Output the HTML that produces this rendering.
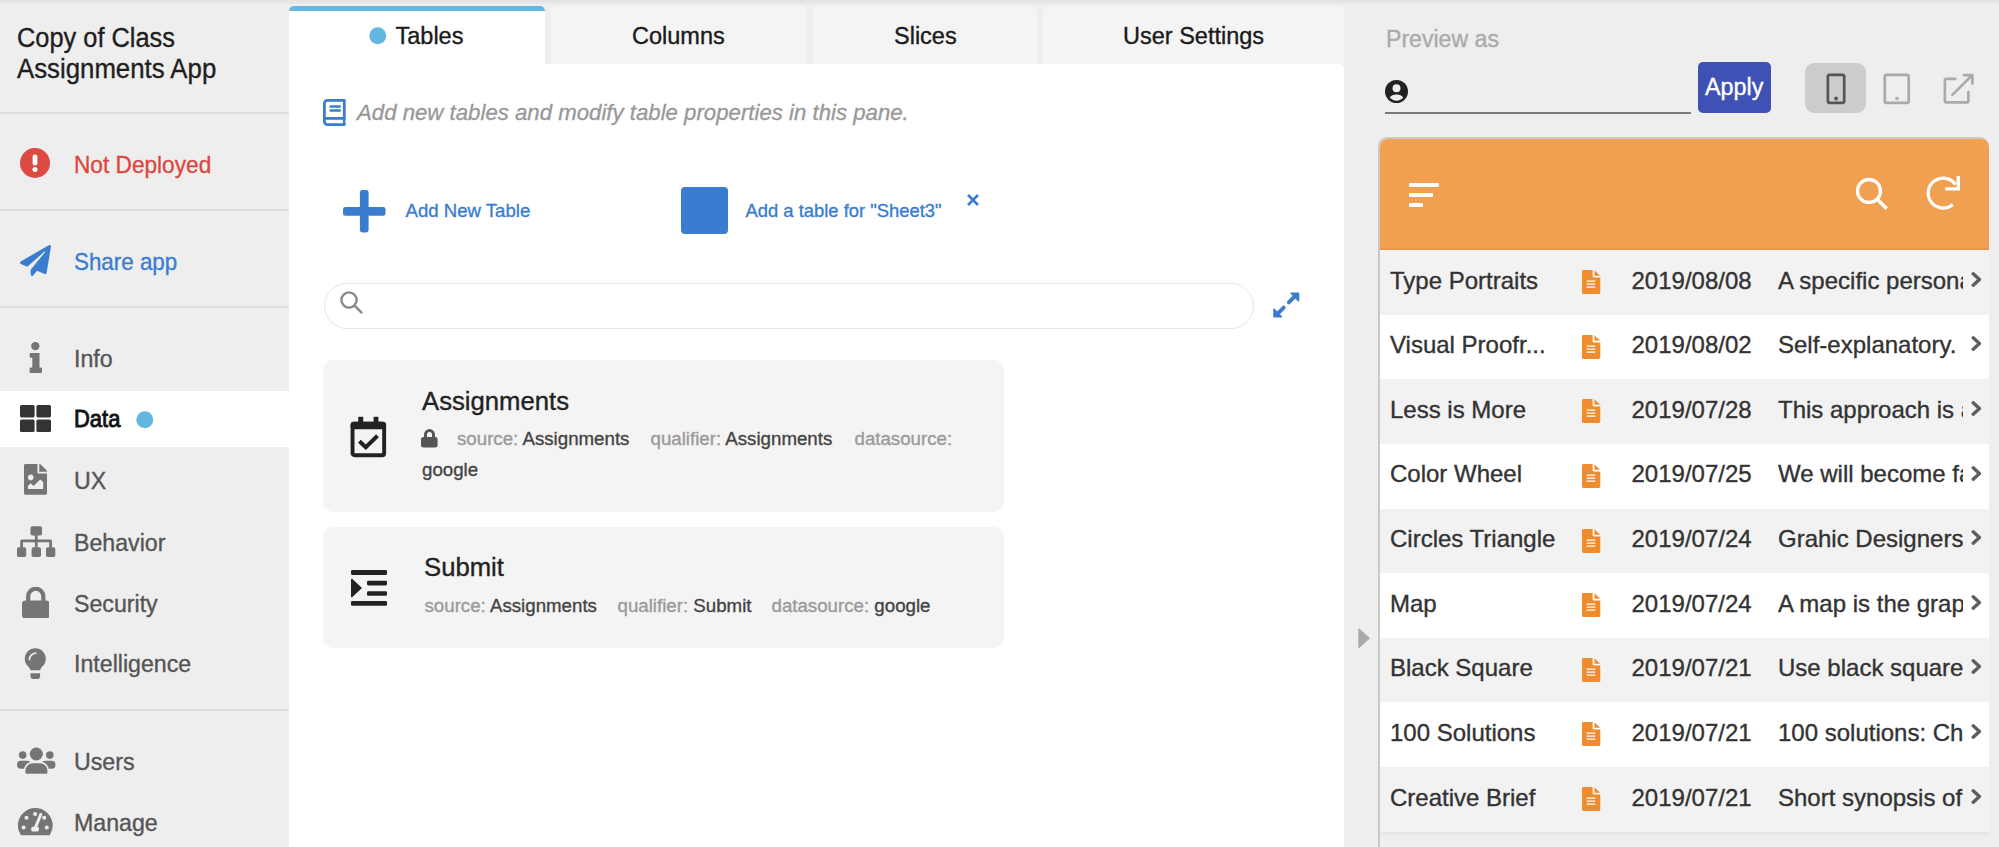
<!DOCTYPE html>
<html><head><meta charset="utf-8"><title>AppSheet Editor</title>
<style>
html,body{margin:0;padding:0;width:1999px;height:847px;overflow:hidden;background:#eeeeee;}
body{position:relative;font-family:"Liberation Sans",sans-serif;}
.t{position:absolute;white-space:nowrap;-webkit-text-stroke-width:0.35px;}
.r{position:absolute;display:block;}
</style></head><body>
<div class="r" style="left:0px;top:0px;width:1999px;height:847px;background:#eeeeee;"></div>
<div class="r" style="left:0px;top:0px;width:1999px;height:4px;background:linear-gradient(#e2e2e2,#eaeaea);"></div>
<div class="t" style="left:16.5px;top:25.3px;font-size:27px;line-height:27px;color:#1e1e1e;font-weight:normal;font-style:normal;transform:scaleX(0.94);transform-origin:0 0;">Copy of Class</div>
<div class="t" style="left:16.5px;top:56.1px;font-size:27px;line-height:27px;color:#1e1e1e;font-weight:normal;font-style:normal;transform:scaleX(0.955);transform-origin:0 0;">Assignments App</div>
<div class="r" style="left:0px;top:112px;width:289px;height:2px;background:#dddddd;"></div>
<div class="r" style="left:0px;top:209px;width:289px;height:2px;background:#dddddd;"></div>
<div class="r" style="left:0px;top:306px;width:289px;height:2px;background:#dddddd;"></div>
<div class="r" style="left:0px;top:709px;width:289px;height:2px;background:#dddddd;"></div>
<svg class="r" style="left:20px;top:148px;" width="30" height="30" viewBox="0 0 30 30"><circle cx="15" cy="15" r="15" fill="#dd4a43"/><rect x="12.6" y="6.5" width="4.8" height="11" rx="2.2" fill="#fff"/><circle cx="15" cy="21.6" r="2.5" fill="#fff"/></svg>
<div class="t" style="left:74px;top:152.9px;font-size:24.1px;line-height:24.1px;color:#dc4841;font-weight:normal;font-style:normal;transform:scaleX(0.94);transform-origin:0 0;">Not Deployed</div>
<svg class="r" style="left:20px;top:244.5px;" width="31" height="31" viewBox="0 0 512 512"><path fill="#3a7dd0" d="M476 3.2L12.5 270.6c-18.1 10.4-15.8 35.6 2.2 43.2L121 358.4l287.3-253.2c5.5-4.9 13.3 2.6 8.6 8.3L176 407v80.5c0 23.6 28.5 32.9 42.5 15.8L282 426l124.6 52.2c14.2 6 30.4-2.9 33-18.2l72-432C515 7.8 493.3-6.8 476 3.2z"/></svg>
<div class="t" style="left:74px;top:249.8px;font-size:23.8px;line-height:23.8px;color:#3a7dd0;font-weight:normal;font-style:normal;transform:scaleX(0.94);transform-origin:0 0;">Share app</div>
<div class="r" style="left:0px;top:391px;width:289px;height:56px;background:#ffffff;"></div>
<svg class="r" style="left:29px;top:342px;" width="13" height="31" viewBox="0 0 13 31"><circle cx="6.3" cy="4.1" r="4.2" fill="#757575"/><path fill="#757575" d="M1.6 11h8.9v14.6h1.6c.5 0 .9.4.9.9v3.6c0 .5-.4.9-.9.9H1.5c-.5 0-.9-.4-.9-.9v-3.6c0-.5.4-.9.9-.9h1.8V15.8H1.6c-.5 0-.9-.4-.9-.9v-3c0-.5.4-.9.9-.9z"/></svg>
<div class="t" style="left:73.5px;top:346.7px;font-size:24.4px;line-height:24.4px;color:#555555;font-weight:normal;font-style:normal;transform:scaleX(0.95);transform-origin:0 0;">Info</div>
<svg class="r" style="left:19.5px;top:405px;" width="31" height="27" viewBox="0 0 31 27"><rect x="0" y="0" width="14.6" height="12.4" rx="1.6" fill="#333"/><rect x="16.4" y="0" width="14.6" height="12.4" rx="1.6" fill="#333"/><rect x="0" y="14.4" width="14.6" height="12.6" rx="1.6" fill="#333"/><rect x="16.4" y="14.4" width="14.6" height="12.6" rx="1.6" fill="#333"/></svg>
<div class="t" style="left:74px;top:408.4px;font-size:23.6px;line-height:23.6px;color:#111;font-weight:normal;font-style:normal;transform:scaleX(0.93);transform-origin:0 0;-webkit-text-stroke-width:0.9px">Data</div>
<svg class="r" style="left:136px;top:411px;" width="17.5" height="17.5" viewBox="0 0 18 18"><circle cx="9" cy="9" r="8.7" fill="#62b6e0"/></svg>
<svg class="r" style="left:24px;top:464.3px;" width="23" height="30.7" viewBox="0 0 384 512"><path fill="#757575" d="M384 121.941V128H256V0h6.059a24 24 0 0 1 16.97 7.029l97.941 97.941a24.002 24.002 0 0 1 7.03 16.971z"/><path fill="#757575" d="M248 160c-13.2 0-24-10.8-24-24V0H24C10.745 0 0 10.745 0 24v464c0 13.255 10.745 24 24 24h336c13.255 0 24-10.745 24-24V160H248zm-135.455 16c26.51 0 48 21.49 48 48s-21.49 48-48 48-48-21.49-48-48 21.49-48 48-48zm208 240h-256l.485-48.485L104.545 328c4.686-4.686 11.799-4.201 16.485.485L160.545 368 264.06 264.485c4.686-4.686 12.284-4.686 16.971 0L320.545 304v112z"/></svg>
<div class="t" style="left:73.5px;top:468.7px;font-size:24.4px;line-height:24.4px;color:#555555;font-weight:normal;font-style:normal;transform:scaleX(0.95);transform-origin:0 0;">UX</div>
<svg class="r" style="left:17px;top:525.5px;" width="38.5" height="31.5" viewBox="0 0 38.5 31.5"><rect x="13.5" y="0.2" width="11.5" height="9.3" rx="1.8" fill="#757575"/><rect x="17.9" y="8.5" width="2.7" height="13" fill="#757575"/><path fill="#757575" d="M5 13.5h28.2c1 0 1.8.8 1.8 1.8V22h-2.8v-5.7H6V22H3.2v-6.7c0-1 .8-1.8 1.8-1.8z"/><rect x="0" y="21.3" width="9.2" height="9.7" rx="1.8" fill="#757575"/><rect x="14.6" y="21.3" width="9.4" height="9.7" rx="1.8" fill="#757575"/><rect x="29" y="21.3" width="9.3" height="9.7" rx="1.8" fill="#757575"/></svg>
<div class="t" style="left:73.5px;top:530.7px;font-size:24.4px;line-height:24.4px;color:#555555;font-weight:normal;font-style:normal;transform:scaleX(0.95);transform-origin:0 0;">Behavior</div>
<svg class="r" style="left:21.5px;top:586.5px;" width="27.5" height="31.5" viewBox="0 0 27.5 31.5"><path fill="none" stroke="#757575" stroke-width="4.2" d="M6.2 15.5V9.3a7.55 7.55 0 0 1 15.1 0v6.2"/><rect x="0" y="13.4" width="27.5" height="18.1" rx="3.4" fill="#757575"/></svg>
<div class="t" style="left:73.5px;top:591.7px;font-size:24.4px;line-height:24.4px;color:#555555;font-weight:normal;font-style:normal;transform:scaleX(0.95);transform-origin:0 0;">Security</div>
<svg class="r" style="left:24px;top:647.5px;" width="22.5" height="31.5" viewBox="0 0 22.5 31.5"><path fill="#757575" d="M11.3 0.3C5.4 0.3 0.8 5 0.8 10.9c0 3 1.2 5.3 3 7.2 1.2 1.3 2.3 2.8 2.6 4.1h9.8c.3-1.3 1.4-2.8 2.6-4.1 1.8-1.9 3-4.2 3-7.2C21.8 5 17.2 0.3 11.3 0.3z"/><path fill="none" stroke="#eee" stroke-width="1.7" stroke-linecap="round" d="M5.4 11.6A6.6 6.6 0 0 1 11.6 5.2"/><path fill="#757575" d="M6.5 25.3h9.6v2.9c0 1.6-1.3 2.9-2.9 2.9h-3.8c-1.6 0-2.9-1.3-2.9-2.9z"/></svg>
<div class="t" style="left:73.5px;top:652.2px;font-size:24.4px;line-height:24.4px;color:#555555;font-weight:normal;font-style:normal;transform:scaleX(0.95);transform-origin:0 0;">Intelligence</div>
<svg class="r" style="left:17px;top:746.5px;" width="38.5" height="28" viewBox="0 0 38.5 28"><circle cx="19.3" cy="7" r="6.5" fill="#757575"/><circle cx="5.7" cy="8.1" r="3.8" fill="#757575"/><circle cx="32.8" cy="8.1" r="3.8" fill="#757575"/><rect x="0" y="13.8" width="14" height="8" rx="4" fill="#757575"/><rect x="24.5" y="13.8" width="14" height="8" rx="4" fill="#757575"/><path fill="#757575" stroke="#eee" stroke-width="1.6" d="M15.6 15.5h7.6c4.4 0 8 3.6 8 8V25.6c0 1.1-.9 2-2 2H9.6c-1.1 0-2-.9-2-2V23.5c0-4.4 3.6-8 8-8z"/></svg>
<div class="t" style="left:73.5px;top:749.5px;font-size:24.4px;line-height:24.4px;color:#555555;font-weight:normal;font-style:normal;transform:scaleX(0.95);transform-origin:0 0;">Users</div>
<svg class="r" style="left:18px;top:808px;" width="35" height="27.5" viewBox="0 0 35 27.5"><path fill="#757575" d="M2.9 27.2A17.4 17.4 0 1 1 31.7 27.2Z"/><g fill="#eee"><circle cx="17.1" cy="6" r="2"/><circle cx="8.5" cy="9.8" r="2"/><circle cx="26.2" cy="9.8" r="2"/><circle cx="5.6" cy="19.5" r="2"/><circle cx="28.8" cy="19.5" r="2"/><rect x="13.2" y="18.7" width="7.7" height="4.8" rx="1.4"/></g><path stroke="#eee" stroke-width="3" stroke-linecap="round" d="M17 20.5L22.8 6.5"/></svg>
<div class="t" style="left:73.5px;top:810.7px;font-size:24.4px;line-height:24.4px;color:#555555;font-weight:normal;font-style:normal;transform:scaleX(0.95);transform-origin:0 0;">Manage</div>
<div class="r" style="left:289px;top:64px;width:1055px;height:783px;background:#ffffff;border-top-right-radius:4px"></div>
<div class="r" style="left:289px;top:6px;width:255.5px;height:58px;background:#ffffff;border-radius:6px 6px 0 0;overflow:hidden"></div>
<div class="r" style="left:289px;top:6px;width:255.5px;height:4.5px;background:#63b8e2;border-radius:6px 6px 0 0"></div>
<div class="r" style="left:551px;top:6px;width:255.5px;height:58px;background:#f4f4f4;border-radius:5px 5px 0 0"></div>
<div class="r" style="left:813px;top:6px;width:223.5px;height:58px;background:#f4f4f4;border-radius:5px 5px 0 0"></div>
<div class="r" style="left:1043px;top:6px;width:301px;height:58px;background:#f4f4f4;border-radius:5px 5px 0 0"></div>
<svg class="r" style="left:369px;top:27px;" width="17.5" height="17.5" viewBox="0 0 18 18"><circle cx="9" cy="9" r="8.7" fill="#62b6e0"/></svg>
<div class="t" style="left:395.5px;top:24.5px;font-size:23.5px;line-height:23.5px;color:#1a1a1a;font-weight:normal;font-style:normal;">Tables</div>
<div class="t" style="left:632px;top:24.5px;font-size:23.5px;line-height:23.5px;color:#1a1a1a;font-weight:normal;font-style:normal;">Columns</div>
<div class="t" style="left:894px;top:24.5px;font-size:23.5px;line-height:23.5px;color:#1a1a1a;font-weight:normal;font-style:normal;">Slices</div>
<div class="t" style="left:1123px;top:24.5px;font-size:23.5px;line-height:23.5px;color:#1a1a1a;font-weight:normal;font-style:normal;">User Settings</div>
<svg class="r" style="left:323px;top:99px;" width="23.5" height="26.5" viewBox="0 0 23.5 26.5"><path fill="none" stroke="#3a7dd0" stroke-width="2.8" stroke-linejoin="round" d="M21.3 1.4H4.6C2.8 1.4 1.4 2.8 1.4 4.6V22.4C1.4 24.2 2.8 25.6 4.6 25.6H21.3Z"/><path fill="none" stroke="#3a7dd0" stroke-width="2.8" d="M1.4 19.4H21.3"/><path fill="#fff" d="M23.6 20.9L21.6 22.1 23.6 23.3z"/><rect x="6.4" y="6.2" width="11.6" height="2.5" rx="1.2" fill="#3a7dd0"/><rect x="6.4" y="10.2" width="11.6" height="2.5" rx="1.2" fill="#3a7dd0"/></svg>
<div class="t" style="left:357.2px;top:101.0px;font-size:22.8px;line-height:22.8px;color:#999999;font-weight:normal;font-style:italic;transform:scaleX(0.974);transform-origin:0 0;">Add new tables and modify table properties in this pane.</div>
<svg class="r" style="left:343px;top:190px;" width="42.5" height="42.5" viewBox="0 0 42.5 42.5"><rect x="16.9" y="0" width="8.7" height="42.5" rx="2.4" fill="#3a7dd0"/><rect x="0" y="16.9" width="42.5" height="8.9" rx="2.4" fill="#3a7dd0"/></svg>
<div class="t" style="left:405.5px;top:201.7px;font-size:18.6px;line-height:18.6px;color:#3a7dd0;font-weight:normal;font-style:normal;">Add New Table</div>
<div class="r" style="left:680.5px;top:187px;width:47.3px;height:47.3px;background:#3a7dd0;border-radius:4px"></div>
<div class="t" style="left:745.5px;top:201.5px;font-size:18.4px;line-height:18.4px;color:#3a7dd0;font-weight:normal;font-style:normal;">Add a table for "Sheet3"</div>
<svg class="r" style="left:967px;top:193.8px;" width="12" height="12" viewBox="0 0 12 12"><path stroke="#3a7dd0" stroke-width="2.6" d="M1 1L11 11M11 1L1 11"/></svg>
<div class="r" style="left:323.5px;top:282.5px;width:930px;height:46.5px;background:#ffffff;border:1.5px solid #e6e6e6;border-radius:24px;box-sizing:border-box"></div>
<svg class="r" style="left:339px;top:290px;" width="25" height="25" viewBox="0 0 25 25"><circle cx="10" cy="10" r="7.6" fill="none" stroke="#8a8a8a" stroke-width="2.4"/><path stroke="#8a8a8a" stroke-width="2.6" stroke-linecap="round" d="M15.6 15.6L22.3 22.3"/></svg>
<svg class="r" style="left:1265px;top:285px;" width="40" height="40" viewBox="0 0 40 40"><g fill="#3a7dd0" stroke="#3a7dd0" stroke-linejoin="round"><path stroke-width="1.6" d="M26.2 8.3H33.5V15.6z"/><path stroke-width="1.6" d="M16.3 31.7H9V24.4z"/><path stroke-width="3.9" stroke-linecap="round" d="M23.8 17.4L30.5 10.7M18.7 22.6L12 29.3"/></g></svg>
<div class="r" style="left:323px;top:360px;width:681px;height:152px;background:#f4f4f4;border-radius:10px"></div>
<div class="r" style="left:323px;top:527px;width:681px;height:121px;background:#f4f4f4;border-radius:10px"></div>
<svg class="r" style="left:349.5px;top:415.5px;" width="37" height="42" viewBox="0 0 37 42"><rect x="8.2" y="0.8" width="5" height="7" fill="#222"/><rect x="23.6" y="0.8" width="4.8" height="7" fill="#222"/><rect x="2.55" y="7.75" width="31.6" height="31.5" rx="2" fill="none" stroke="#222" stroke-width="3.9"/><rect x="0.6" y="5.8" width="35.5" height="7.5" rx="3" fill="#222"/><path fill="none" stroke="#222" stroke-width="4" d="M9.4 25.3L15.8 31.2 27.5 19.8"/></svg>
<div class="t" style="left:422px;top:388.5px;font-size:25.7px;line-height:25.7px;color:#222;font-weight:normal;font-style:normal;">Assignments</div>
<svg class="r" style="left:421px;top:429px;" width="17" height="19" viewBox="0 0 17 19"><path fill="none" stroke="#555" stroke-width="3" d="M4.5 9V5.6a4 4 0 0 1 8 0V9"/><rect x="0" y="8" width="16.6" height="10.6" rx="2.4" fill="#555"/></svg>
<div class="t" style="left:457px;top:429.5px;font-size:18.7px;line-height:18.7px;color:#444;font-weight:normal;font-style:normal;"><span style="color:#9a9a9a">source: </span>Assignments</div>
<div class="t" style="left:650.5px;top:429.5px;font-size:18.7px;line-height:18.7px;color:#444;font-weight:normal;font-style:normal;"><span style="color:#9a9a9a">qualifier: </span>Assignments</div>
<div class="t" style="left:854.5px;top:429.5px;font-size:18.7px;line-height:18.7px;color:#444;font-weight:normal;font-style:normal;"><span style="color:#9a9a9a">datasource:</span></div>
<div class="t" style="left:422px;top:460.6px;font-size:18.7px;line-height:18.7px;color:#444;font-weight:normal;font-style:normal;">google</div>
<svg class="r" style="left:351px;top:570px;" width="36" height="36" viewBox="0 0 36 36"><rect x="0" y="0" width="36" height="4.9" rx="1.3" fill="#222"/><rect x="16" y="10.8" width="20" height="4.6" rx="1.3" fill="#222"/><rect x="16" y="21.2" width="20" height="4.6" rx="1.3" fill="#222"/><rect x="0" y="31" width="36" height="4.8" rx="1.3" fill="#222"/><path fill="#222" stroke="#222" stroke-width="1.6" stroke-linejoin="round" d="M0.8 9.6L10 18 0.8 26.5z"/></svg>
<div class="t" style="left:424px;top:554.6px;font-size:25.7px;line-height:25.7px;color:#222;font-weight:normal;font-style:normal;">Submit</div>
<div class="t" style="left:424.5px;top:596.8px;font-size:18.7px;line-height:18.7px;color:#444;font-weight:normal;font-style:normal;"><span style="color:#9a9a9a">source: </span>Assignments</div>
<div class="t" style="left:617.5px;top:596.8px;font-size:18.7px;line-height:18.7px;color:#444;font-weight:normal;font-style:normal;"><span style="color:#9a9a9a">qualifier: </span>Submit</div>
<div class="t" style="left:771.5px;top:596.8px;font-size:18.7px;line-height:18.7px;color:#444;font-weight:normal;font-style:normal;"><span style="color:#9a9a9a">datasource: </span>google</div>
<svg class="r" style="left:1357.5px;top:628px;" width="12" height="20.5" viewBox="0 0 12 20.5"><path fill="#aaaaaa" stroke="#aaaaaa" stroke-width="1.5" stroke-linejoin="round" d="M1 1.2L11 10.25 1 19.3z"/></svg>
<div class="t" style="left:1386px;top:28.0px;font-size:23.1px;line-height:23.1px;color:#aaaaaa;font-weight:normal;font-style:normal;">Preview as</div>
<svg class="r" style="left:1385px;top:79.5px;" width="23" height="23" viewBox="0 0 23 23"><circle cx="11.5" cy="11.5" r="11.5" fill="#222"/><circle cx="11.5" cy="8.3" r="4" fill="#eee"/><path fill="#eee" d="M4.8 17.6c1.2-2 3.7-3.1 6.7-3.1s5.5 1.1 6.7 3.1c-1.6 1.9-4 3.1-6.7 3.1s-5.1-1.2-6.7-3.1z"/></svg>
<div class="r" style="left:1385px;top:112px;width:306px;height:2px;background:#7a7a7a;"></div>
<div class="r" style="left:1698px;top:62.2px;width:73px;height:51.3px;background:#3f51b5;border-radius:5px"></div>
<div class="t" style="left:1705px;top:75.9px;font-size:23.3px;line-height:23.3px;color:#ffffff;font-weight:normal;font-style:normal;">Apply</div>
<div class="r" style="left:1805px;top:62.5px;width:61px;height:50.5px;background:#cccccc;border-radius:9px"></div>
<svg class="r" style="left:1825.5px;top:72.5px;" width="20" height="32" viewBox="0 0 20 32"><rect x="1.9" y="1.8" width="16.3" height="28.1" rx="1.8" fill="none" stroke="#555" stroke-width="2.7"/><circle cx="10.1" cy="25.5" r="1.9" fill="#555"/></svg>
<svg class="r" style="left:1883px;top:72.5px;" width="28" height="32" viewBox="0 0 28 32"><rect x="1.8" y="1.8" width="23.9" height="28.1" rx="1.8" fill="none" stroke="#aaa" stroke-width="2.7"/><circle cx="14" cy="25.5" r="1.8" fill="#aaa"/></svg>
<svg class="r" style="left:1942.5px;top:72.5px;" width="32" height="32" viewBox="0 0 32 32"><g fill="none" stroke="#aaa" stroke-width="2.7" stroke-linecap="round" stroke-linejoin="round"><path d="M12.2 5.95H3.1C2.4 5.95 1.85 6.5 1.85 7.2V28.1C1.85 28.8 2.4 29.35 3.1 29.35H24.2C24.9 29.35 25.4 28.8 25.4 28.1V19.2"/><path d="M9.4 21.9L28.3 3M20.9 2.1H29.35V10.5"/></g></svg>
<div class="r" style="left:1378px;top:137.3px;width:611px;height:720px;background:#efefef;border-radius:9px 9px 0 0;border:2px solid #c9c9c9;border-bottom:none;border-right:none;box-sizing:border-box"></div>
<div class="r" style="left:1380px;top:139px;width:609px;height:110.8px;background:#f0a050;border-radius:8px 8px 0 0"></div>
<div class="r" style="left:1380px;top:247.8px;width:609px;height:2px;background:linear-gradient(#eb9a4e,#e19349);"></div>
<div class="r" style="left:1409px;top:183.3px;width:30px;height:4px;background:#fff;border-radius:1px"></div>
<div class="r" style="left:1409px;top:192.8px;width:24.3px;height:4.3px;background:#fff;border-radius:1px"></div>
<div class="r" style="left:1409px;top:202.5px;width:14px;height:4.3px;background:#fff;border-radius:1px"></div>
<svg class="r" style="left:1853px;top:175px;" width="38" height="38" viewBox="0 0 38 38"><circle cx="16" cy="16" r="11.5" fill="none" stroke="#fff" stroke-width="3.3"/><path stroke="#fff" stroke-width="3.5" d="M24.3 24.3L33.7 33.7"/></svg>
<svg class="r" style="left:1924px;top:173px;" width="40" height="40" viewBox="0 0 40 40"><path fill="none" stroke="#fff" stroke-width="3.3" d="M28.8 31.6A15 15 0 1 1 31.5 11.5"/><path fill="none" stroke="#fff" stroke-width="3.4" d="M34.3 3V15.9H21.2"/></svg>
<div class="r" style="left:1380px;top:250.0px;width:609px;height:64.9px;background:#f2f2f2;"></div>
<div class="t" style="left:1390px;top:268.5px;font-size:24px;line-height:24px;color:#333;font-weight:normal;font-style:normal;">Type Portraits</div>
<svg class="r" style="left:1582px;top:270.0px;" width="18.5" height="24" viewBox="0 0 18.5 24"><path fill="#f08c30" d="M1.4 0H10.6V6.2c0 .7.5 1.2 1.2 1.2h6.5V22.5c0 .8-.6 1.4-1.4 1.4H1.4C.6 23.9 0 23.3 0 22.5V1.4C0 .6.6 0 1.4 0z"/><path fill="#f08c30" d="M12.5 0.3L18.1 5.8h-5.6z"/><rect x="4.6" y="10.4" width="8.7" height="1.4" rx=".4" fill="#fff"/><rect x="4.6" y="13.4" width="8.7" height="1.4" rx=".4" fill="#fff"/><rect x="4.6" y="16.4" width="8.7" height="1.4" rx=".4" fill="#fff"/></svg>
<div class="t" style="left:1631.5px;top:268.5px;font-size:24px;line-height:24px;color:#333;font-weight:normal;font-style:normal;">2019/08/08</div>
<div class="t" style="left:1778px;top:268.5px;width:185px;overflow:hidden;font-size:24px;line-height:24px;height:30px;color:#333">A specific persona</div>
<svg class="r" style="left:1971px;top:271.7px;" width="11" height="15" viewBox="0 0 11 15"><path fill="none" stroke="#5e5e5e" stroke-width="3.4" stroke-linecap="round" stroke-linejoin="round" d="M2.2 1.8L8.4 7.5 2.2 13.2"/></svg>
<div class="r" style="left:1380px;top:314.6px;width:609px;height:64.9px;background:#ffffff;"></div>
<div class="t" style="left:1390px;top:333.1px;font-size:24px;line-height:24px;color:#333;font-weight:normal;font-style:normal;">Visual Proofr...</div>
<svg class="r" style="left:1582px;top:334.6px;" width="18.5" height="24" viewBox="0 0 18.5 24"><path fill="#f08c30" d="M1.4 0H10.6V6.2c0 .7.5 1.2 1.2 1.2h6.5V22.5c0 .8-.6 1.4-1.4 1.4H1.4C.6 23.9 0 23.3 0 22.5V1.4C0 .6.6 0 1.4 0z"/><path fill="#f08c30" d="M12.5 0.3L18.1 5.8h-5.6z"/><rect x="4.6" y="10.4" width="8.7" height="1.4" rx=".4" fill="#fff"/><rect x="4.6" y="13.4" width="8.7" height="1.4" rx=".4" fill="#fff"/><rect x="4.6" y="16.4" width="8.7" height="1.4" rx=".4" fill="#fff"/></svg>
<div class="t" style="left:1631.5px;top:333.1px;font-size:24px;line-height:24px;color:#333;font-weight:normal;font-style:normal;">2019/08/02</div>
<div class="t" style="left:1778px;top:333.2px;width:185px;overflow:hidden;font-size:24px;line-height:24px;height:30px;color:#333">Self-explanatory.</div>
<svg class="r" style="left:1971px;top:336.3px;" width="11" height="15" viewBox="0 0 11 15"><path fill="none" stroke="#5e5e5e" stroke-width="3.4" stroke-linecap="round" stroke-linejoin="round" d="M2.2 1.8L8.4 7.5 2.2 13.2"/></svg>
<div class="r" style="left:1380px;top:379.2px;width:609px;height:64.9px;background:#f2f2f2;"></div>
<div class="t" style="left:1390px;top:397.7px;font-size:24px;line-height:24px;color:#333;font-weight:normal;font-style:normal;">Less is More</div>
<svg class="r" style="left:1582px;top:399.2px;" width="18.5" height="24" viewBox="0 0 18.5 24"><path fill="#f08c30" d="M1.4 0H10.6V6.2c0 .7.5 1.2 1.2 1.2h6.5V22.5c0 .8-.6 1.4-1.4 1.4H1.4C.6 23.9 0 23.3 0 22.5V1.4C0 .6.6 0 1.4 0z"/><path fill="#f08c30" d="M12.5 0.3L18.1 5.8h-5.6z"/><rect x="4.6" y="10.4" width="8.7" height="1.4" rx=".4" fill="#fff"/><rect x="4.6" y="13.4" width="8.7" height="1.4" rx=".4" fill="#fff"/><rect x="4.6" y="16.4" width="8.7" height="1.4" rx=".4" fill="#fff"/></svg>
<div class="t" style="left:1631.5px;top:397.7px;font-size:24px;line-height:24px;color:#333;font-weight:normal;font-style:normal;">2019/07/28</div>
<div class="t" style="left:1778px;top:397.8px;width:185px;overflow:hidden;font-size:24px;line-height:24px;height:30px;color:#333">This approach is a</div>
<svg class="r" style="left:1971px;top:400.9px;" width="11" height="15" viewBox="0 0 11 15"><path fill="none" stroke="#5e5e5e" stroke-width="3.4" stroke-linecap="round" stroke-linejoin="round" d="M2.2 1.8L8.4 7.5 2.2 13.2"/></svg>
<div class="r" style="left:1380px;top:443.9px;width:609px;height:64.9px;background:#ffffff;"></div>
<div class="t" style="left:1390px;top:462.4px;font-size:24px;line-height:24px;color:#333;font-weight:normal;font-style:normal;">Color Wheel</div>
<svg class="r" style="left:1582px;top:463.9px;" width="18.5" height="24" viewBox="0 0 18.5 24"><path fill="#f08c30" d="M1.4 0H10.6V6.2c0 .7.5 1.2 1.2 1.2h6.5V22.5c0 .8-.6 1.4-1.4 1.4H1.4C.6 23.9 0 23.3 0 22.5V1.4C0 .6.6 0 1.4 0z"/><path fill="#f08c30" d="M12.5 0.3L18.1 5.8h-5.6z"/><rect x="4.6" y="10.4" width="8.7" height="1.4" rx=".4" fill="#fff"/><rect x="4.6" y="13.4" width="8.7" height="1.4" rx=".4" fill="#fff"/><rect x="4.6" y="16.4" width="8.7" height="1.4" rx=".4" fill="#fff"/></svg>
<div class="t" style="left:1631.5px;top:462.4px;font-size:24px;line-height:24px;color:#333;font-weight:normal;font-style:normal;">2019/07/25</div>
<div class="t" style="left:1778px;top:462.4px;width:185px;overflow:hidden;font-size:24px;line-height:24px;height:30px;color:#333">We will become fa</div>
<svg class="r" style="left:1971px;top:465.6px;" width="11" height="15" viewBox="0 0 11 15"><path fill="none" stroke="#5e5e5e" stroke-width="3.4" stroke-linecap="round" stroke-linejoin="round" d="M2.2 1.8L8.4 7.5 2.2 13.2"/></svg>
<div class="r" style="left:1380px;top:508.5px;width:609px;height:64.9px;background:#f2f2f2;"></div>
<div class="t" style="left:1390px;top:527.0px;font-size:24px;line-height:24px;color:#333;font-weight:normal;font-style:normal;">Circles Triangle</div>
<svg class="r" style="left:1582px;top:528.5px;" width="18.5" height="24" viewBox="0 0 18.5 24"><path fill="#f08c30" d="M1.4 0H10.6V6.2c0 .7.5 1.2 1.2 1.2h6.5V22.5c0 .8-.6 1.4-1.4 1.4H1.4C.6 23.9 0 23.3 0 22.5V1.4C0 .6.6 0 1.4 0z"/><path fill="#f08c30" d="M12.5 0.3L18.1 5.8h-5.6z"/><rect x="4.6" y="10.4" width="8.7" height="1.4" rx=".4" fill="#fff"/><rect x="4.6" y="13.4" width="8.7" height="1.4" rx=".4" fill="#fff"/><rect x="4.6" y="16.4" width="8.7" height="1.4" rx=".4" fill="#fff"/></svg>
<div class="t" style="left:1631.5px;top:527.0px;font-size:24px;line-height:24px;color:#333;font-weight:normal;font-style:normal;">2019/07/24</div>
<div class="t" style="left:1778px;top:527.0px;width:185px;overflow:hidden;font-size:24px;line-height:24px;height:30px;color:#333">Grahic Designers</div>
<svg class="r" style="left:1971px;top:530.2px;" width="11" height="15" viewBox="0 0 11 15"><path fill="none" stroke="#5e5e5e" stroke-width="3.4" stroke-linecap="round" stroke-linejoin="round" d="M2.2 1.8L8.4 7.5 2.2 13.2"/></svg>
<div class="r" style="left:1380px;top:573.1px;width:609px;height:64.9px;background:#ffffff;"></div>
<div class="t" style="left:1390px;top:591.6px;font-size:24px;line-height:24px;color:#333;font-weight:normal;font-style:normal;">Map</div>
<svg class="r" style="left:1582px;top:593.1px;" width="18.5" height="24" viewBox="0 0 18.5 24"><path fill="#f08c30" d="M1.4 0H10.6V6.2c0 .7.5 1.2 1.2 1.2h6.5V22.5c0 .8-.6 1.4-1.4 1.4H1.4C.6 23.9 0 23.3 0 22.5V1.4C0 .6.6 0 1.4 0z"/><path fill="#f08c30" d="M12.5 0.3L18.1 5.8h-5.6z"/><rect x="4.6" y="10.4" width="8.7" height="1.4" rx=".4" fill="#fff"/><rect x="4.6" y="13.4" width="8.7" height="1.4" rx=".4" fill="#fff"/><rect x="4.6" y="16.4" width="8.7" height="1.4" rx=".4" fill="#fff"/></svg>
<div class="t" style="left:1631.5px;top:591.6px;font-size:24px;line-height:24px;color:#333;font-weight:normal;font-style:normal;">2019/07/24</div>
<div class="t" style="left:1778px;top:591.6px;width:185px;overflow:hidden;font-size:24px;line-height:24px;height:30px;color:#333">A map is the graph</div>
<svg class="r" style="left:1971px;top:594.8px;" width="11" height="15" viewBox="0 0 11 15"><path fill="none" stroke="#5e5e5e" stroke-width="3.4" stroke-linecap="round" stroke-linejoin="round" d="M2.2 1.8L8.4 7.5 2.2 13.2"/></svg>
<div class="r" style="left:1380px;top:637.7px;width:609px;height:64.9px;background:#f2f2f2;"></div>
<div class="t" style="left:1390px;top:656.2px;font-size:24px;line-height:24px;color:#333;font-weight:normal;font-style:normal;">Black Square</div>
<svg class="r" style="left:1582px;top:657.7px;" width="18.5" height="24" viewBox="0 0 18.5 24"><path fill="#f08c30" d="M1.4 0H10.6V6.2c0 .7.5 1.2 1.2 1.2h6.5V22.5c0 .8-.6 1.4-1.4 1.4H1.4C.6 23.9 0 23.3 0 22.5V1.4C0 .6.6 0 1.4 0z"/><path fill="#f08c30" d="M12.5 0.3L18.1 5.8h-5.6z"/><rect x="4.6" y="10.4" width="8.7" height="1.4" rx=".4" fill="#fff"/><rect x="4.6" y="13.4" width="8.7" height="1.4" rx=".4" fill="#fff"/><rect x="4.6" y="16.4" width="8.7" height="1.4" rx=".4" fill="#fff"/></svg>
<div class="t" style="left:1631.5px;top:656.2px;font-size:24px;line-height:24px;color:#333;font-weight:normal;font-style:normal;">2019/07/21</div>
<div class="t" style="left:1778px;top:656.3px;width:185px;overflow:hidden;font-size:24px;line-height:24px;height:30px;color:#333">Use black squares</div>
<svg class="r" style="left:1971px;top:659.4px;" width="11" height="15" viewBox="0 0 11 15"><path fill="none" stroke="#5e5e5e" stroke-width="3.4" stroke-linecap="round" stroke-linejoin="round" d="M2.2 1.8L8.4 7.5 2.2 13.2"/></svg>
<div class="r" style="left:1380px;top:702.3px;width:609px;height:64.9px;background:#ffffff;"></div>
<div class="t" style="left:1390px;top:720.8px;font-size:24px;line-height:24px;color:#333;font-weight:normal;font-style:normal;">100 Solutions</div>
<svg class="r" style="left:1582px;top:722.3px;" width="18.5" height="24" viewBox="0 0 18.5 24"><path fill="#f08c30" d="M1.4 0H10.6V6.2c0 .7.5 1.2 1.2 1.2h6.5V22.5c0 .8-.6 1.4-1.4 1.4H1.4C.6 23.9 0 23.3 0 22.5V1.4C0 .6.6 0 1.4 0z"/><path fill="#f08c30" d="M12.5 0.3L18.1 5.8h-5.6z"/><rect x="4.6" y="10.4" width="8.7" height="1.4" rx=".4" fill="#fff"/><rect x="4.6" y="13.4" width="8.7" height="1.4" rx=".4" fill="#fff"/><rect x="4.6" y="16.4" width="8.7" height="1.4" rx=".4" fill="#fff"/></svg>
<div class="t" style="left:1631.5px;top:720.8px;font-size:24px;line-height:24px;color:#333;font-weight:normal;font-style:normal;">2019/07/21</div>
<div class="t" style="left:1778px;top:720.9px;width:185px;overflow:hidden;font-size:24px;line-height:24px;height:30px;color:#333">100 solutions: Ch</div>
<svg class="r" style="left:1971px;top:724.0px;" width="11" height="15" viewBox="0 0 11 15"><path fill="none" stroke="#5e5e5e" stroke-width="3.4" stroke-linecap="round" stroke-linejoin="round" d="M2.2 1.8L8.4 7.5 2.2 13.2"/></svg>
<div class="r" style="left:1380px;top:767.0px;width:609px;height:64.9px;background:#f2f2f2;"></div>
<div class="t" style="left:1390px;top:785.5px;font-size:24px;line-height:24px;color:#333;font-weight:normal;font-style:normal;">Creative Brief</div>
<svg class="r" style="left:1582px;top:787.0px;" width="18.5" height="24" viewBox="0 0 18.5 24"><path fill="#f08c30" d="M1.4 0H10.6V6.2c0 .7.5 1.2 1.2 1.2h6.5V22.5c0 .8-.6 1.4-1.4 1.4H1.4C.6 23.9 0 23.3 0 22.5V1.4C0 .6.6 0 1.4 0z"/><path fill="#f08c30" d="M12.5 0.3L18.1 5.8h-5.6z"/><rect x="4.6" y="10.4" width="8.7" height="1.4" rx=".4" fill="#fff"/><rect x="4.6" y="13.4" width="8.7" height="1.4" rx=".4" fill="#fff"/><rect x="4.6" y="16.4" width="8.7" height="1.4" rx=".4" fill="#fff"/></svg>
<div class="t" style="left:1631.5px;top:785.5px;font-size:24px;line-height:24px;color:#333;font-weight:normal;font-style:normal;">2019/07/21</div>
<div class="t" style="left:1778px;top:785.5px;width:185px;overflow:hidden;font-size:24px;line-height:24px;height:30px;color:#333">Short synopsis of</div>
<svg class="r" style="left:1971px;top:788.7px;" width="11" height="15" viewBox="0 0 11 15"><path fill="none" stroke="#5e5e5e" stroke-width="3.4" stroke-linecap="round" stroke-linejoin="round" d="M2.2 1.8L8.4 7.5 2.2 13.2"/></svg>
<div class="r" style="left:1380px;top:831.6px;width:609px;height:5px;background:linear-gradient(#e3e3e3,#efefef);"></div>
</body></html>
